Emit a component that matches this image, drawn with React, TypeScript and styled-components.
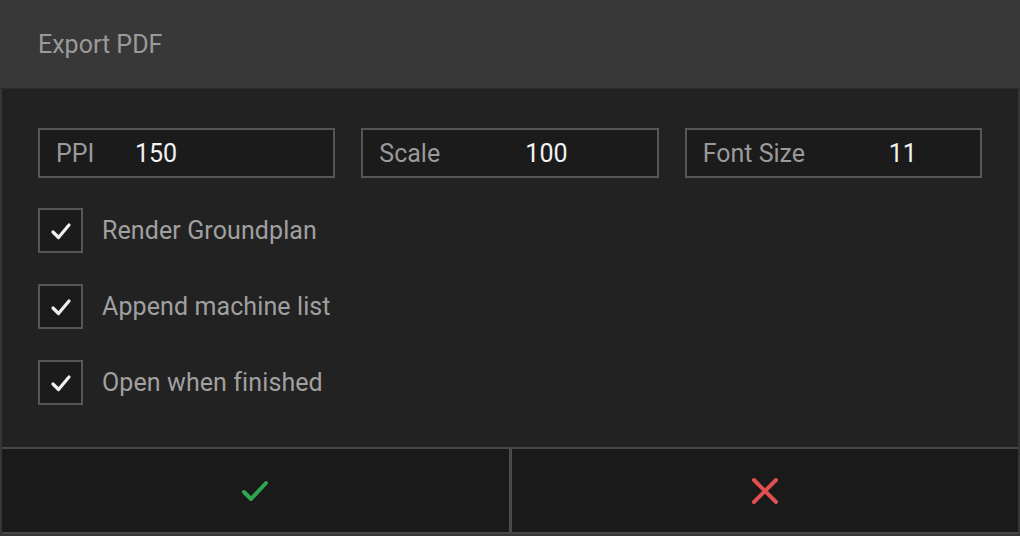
import React from "react";
import styled, { createGlobalStyle } from "styled-components";

const Global = createGlobalStyle`
  html, body { margin: 0; padding: 0; background: #222222; }
  body { font-family: Roboto, "Noto Sans", sans-serif; }
  * { box-sizing: border-box; }
`;

const Dialog = styled.div`
  width: 1020px;
  height: 536px;
  display: flex;
  flex-direction: column;
  border: 2px solid #363636;
  border-top: none;
  background: #222222;
`;

const Header = styled.div`
  height: 89px;
  flex: none;
  margin: 0 -2px;
  padding-left: 38px;
  display: flex;
  align-items: center;
  background: #383838;
  color: #9a9a9a;
  font-size: 25px;
  border-bottom: 1px solid #2c2c2c;
`;

const Body = styled.div`
  flex: 1;
  padding: 39px 36px 0 36px;
  display: flex;
  flex-direction: column;
`;

const Fields = styled.div`
  display: grid;
  grid-template-columns: repeat(3, 1fr);
  column-gap: 26px;
  margin-bottom: 30px;
`;

const Field = styled.div`
  height: 50px;
  border: 2px solid #57555a;
  background: #1b1b1b;
  display: flex;
  align-items: center;
  padding-left: 16px;
  font-size: 25px;
`;

const Label = styled.span<{ $w: number }>`
  width: ${(p) => p.$w}px;
  flex: none;
  color: #9a9a9a;
`;

const Value = styled.span`
  color: #f2f2f2;
`;

const Options = styled.div`
  display: flex;
  flex-direction: column;
  gap: 31px;
`;

const Option = styled.div`
  display: flex;
  align-items: center;
  gap: 19px;
  color: #a0a0a0;
  font-size: 25px;
  letter-spacing: 0.1px;
`;

const Box = styled.div`
  width: 45px;
  height: 45px;
  border: 2px solid #57555a;
  background: #1b1b1b;
  display: flex;
  align-items: center;
  justify-content: center;
`;

const Footer = styled.div`
  height: 87px;
  flex: none;
  border-top: 2px solid #464646;
  border-bottom: 2px solid #464646;
  display: grid;
  grid-template-columns: 1fr 1fr;
  column-gap: 3px;
  background: #4a4a4a;
`;

const FooterButton = styled.button`
  border: none;
  background: #1a1a1a;
  display: flex;
  align-items: center;
  justify-content: center;
  padding: 0;
  cursor: pointer;
`;

const CheckMark = () => (
  <svg width="24" height="24" viewBox="0 0 24 24">
    <path d="M4 13 L9.5 18.5 L20 6" fill="none" stroke="#f0f0f0" strokeWidth="3.2" strokeLinecap="round" strokeLinejoin="round" />
  </svg>
);

const OkIcon = () => (
  <svg width="34" height="34" viewBox="0 0 34 34">
    <path d="M6 18 L13 25 L28 9" fill="none" stroke="#2fa650" strokeWidth="4" strokeLinecap="round" strokeLinejoin="round" />
  </svg>
);

const CancelIcon = () => (
  <svg width="32" height="32" viewBox="0 0 32 32">
    <path d="M5 5 L27 27 M27 5 L5 27" fill="none" stroke="#e05050" strokeWidth="4" strokeLinecap="round" />
  </svg>
);

const fields = [
  { label: "PPI", value: "150", w: 79 },
  { label: "Scale", value: "100", w: 146 },
  { label: "Font Size", value: "11", w: 186 },
];

const options = ["Render Groundplan", "Append machine list", "Open when finished"];

export default function App() {
  return (
    <>
      <Global />
      <Dialog>
        <Header>Export PDF</Header>
        <Body>
          <Fields>
            {fields.map((f) => (
              <Field key={f.label}>
                <Label $w={f.w}>{f.label}</Label>
                <Value>{f.value}</Value>
              </Field>
            ))}
          </Fields>
          <Options>
            {options.map((o) => (
              <Option key={o}>
                <Box>
                  <CheckMark />
                </Box>
                {o}
              </Option>
            ))}
          </Options>
        </Body>
        <Footer>
          <FooterButton aria-label="OK">
            <OkIcon />
          </FooterButton>
          <FooterButton aria-label="Cancel">
            <CancelIcon />
          </FooterButton>
        </Footer>
      </Dialog>
    </>
  );
}
